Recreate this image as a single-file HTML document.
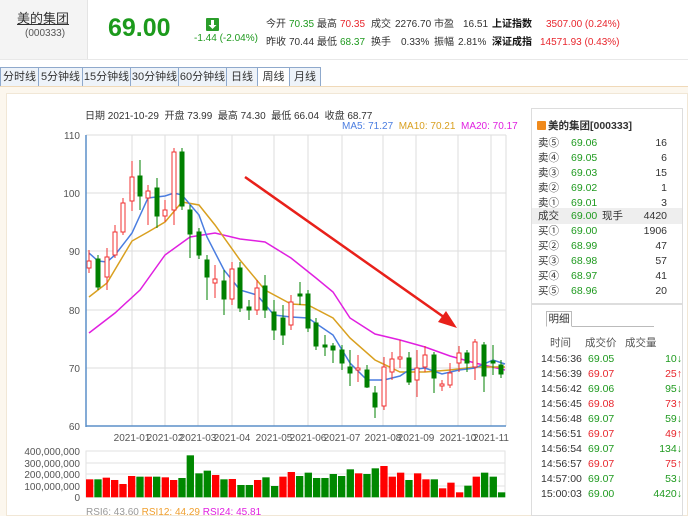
<!DOCTYPE html>
<html><head><meta charset="utf-8"><style>
*{margin:0;padding:0;box-sizing:border-box}
body{width:688px;height:516px;overflow:hidden;background:#fff;font-family:"Liberation Sans","Noto Sans CJK SC",sans-serif;font-size:11px;color:#333;position:relative}
.a{position:absolute;white-space:nowrap}
.s{position:absolute;white-space:nowrap;font-size:10px;color:#333;line-height:12px;height:12px}
.g,.s.g{color:#1f9a1f}.r,.s.r{color:#e8262d}
.tab{position:absolute;top:67px;height:19px;border:1px solid #8fa9cc;border-bottom:none;background:#eef3f9;font-size:11px;color:#333;text-align:center;line-height:18px}
.ob div{position:absolute;height:15px;line-height:15px;font-size:10.5px;white-space:nowrap}
.ob .v{left:622px;width:60px;text-align:right}
</style></head><body>
<div class="a" style="left:0;top:0;width:88px;height:59px;background:#f4f4f4;border-right:1px solid #e4e4e4"></div>
<div class="a" style="left:0;top:59px;width:688px;height:1px;background:#e8e8e8"></div>
<div class="a" style="left:17px;top:8px;font-size:13px;text-decoration:underline;color:#333">美的集团</div>
<div class="a" style="left:25px;top:28px;font-size:10px;color:#555">(000333)</div>
<div class="a" style="left:108px;top:14px;font-size:25px;font-weight:bold;color:#1c9a1c">69.00</div>
<div class="a" style="left:206px;top:18px;width:13px;height:13px;background:#2a9d2a;border-radius:1px"></div>
<svg class="a" style="left:206px;top:18px" width="13" height="13"><path d="M5 2h3v5h2.5L6.5 11 2.5 7H5z" fill="#fff"/></svg>
<div class="a g" style="left:194px;top:33px;font-size:10px">-1.44 (-2.04%)</div>
<div class="s" style="left:266px;top:19px">今开</div><div class="s g" style="left:289px;top:19px">70.35</div>
<div class="s" style="left:317px;top:19px">最高</div><div class="s r" style="left:340px;top:19px">70.35</div>
<div class="s" style="left:371px;top:19px">成交</div><div class="s" style="left:395px;top:19px">2276.70</div>
<div class="s" style="left:434px;top:19px">市盈</div><div class="s" style="left:463px;top:19px">16.51</div>
<div class="s" style="left:492px;top:19px;font-weight:bold;color:#111">上证指数</div><div class="s r" style="left:546px;top:19px">3507.00 (0.24%)</div>
<div class="s" style="left:266px;top:37px">昨收</div><div class="s" style="left:289px;top:37px">70.44</div>
<div class="s" style="left:317px;top:37px">最低</div><div class="s g" style="left:340px;top:37px">68.37</div>
<div class="s" style="left:371px;top:37px">换手</div><div class="s" style="left:401px;top:37px">0.33%</div>
<div class="s" style="left:434px;top:37px">振幅</div><div class="s" style="left:458px;top:37px">2.81%</div>
<div class="s" style="left:492px;top:37px;font-weight:bold;color:#111">深证成指</div><div class="s r" style="left:540px;top:37px">14571.93 (0.43%)</div>

<div class="tab" style="left:0;width:39px">分时线</div>
<div class="tab" style="left:38px;width:45px">5分钟线</div>
<div class="tab" style="left:82px;width:49px">15分钟线</div>
<div class="tab" style="left:130px;width:49px">30分钟线</div>
<div class="tab" style="left:178px;width:49px">60分钟线</div>
<div class="tab" style="left:226px;width:32px">日线</div>
<div class="tab" style="left:257px;width:33px;background:#fff;height:20px">周线</div>
<div class="tab" style="left:289px;width:32px">月线</div>
<div class="a" style="left:0;top:86px;width:688px;height:430px;background:#fcf7ee;border-top:1px solid #f0d9b8"></div>
<div class="a" style="left:6px;top:93px;width:682px;height:423px;background:#fff;border:1px solid #f1e7d6"></div>

<div class="a" style="left:85px;top:107px;font-size:10px">日期 2021-10-29 &nbsp;开盘 73.99 &nbsp;最高 74.30 &nbsp;最低 66.04 &nbsp;收盘 68.77</div>
<div class="a" style="left:342px;top:121px;font-size:10px"><span style="color:#4a7de0">MA5: 71.27</span> &nbsp;<span style="color:#d9a020">MA10: 70.21</span> &nbsp;<span style="color:#e020e0">MA20: 70.17</span></div>

<svg class="a" style="left:0;top:0" width="688" height="516">
<g stroke="#ddd" stroke-width="1">
<line x1="86" y1="135" x2="506" y2="135"/><line x1="86" y1="193" x2="506" y2="193"/><line x1="86" y1="251" x2="506" y2="251"/><line x1="86" y1="310" x2="506" y2="310"/><line x1="86" y1="368" x2="506" y2="368"/>
<line x1="132" y1="135" x2="132" y2="426"/><line x1="165" y1="135" x2="165" y2="426"/><line x1="198" y1="135" x2="198" y2="426"/><line x1="232" y1="135" x2="232" y2="426"/><line x1="274" y1="135" x2="274" y2="426"/><line x1="308" y1="135" x2="308" y2="426"/><line x1="342" y1="135" x2="342" y2="426"/><line x1="383" y1="135" x2="383" y2="426"/><line x1="416" y1="135" x2="416" y2="426"/><line x1="458" y1="135" x2="458" y2="426"/><line x1="491" y1="135" x2="491" y2="426"/><line x1="506" y1="135" x2="506" y2="426"/>
</g>
<g font-size="10" fill="#555" text-anchor="end"><text x="80" y="139">110</text><text x="80" y="197">100</text><text x="80" y="255">90</text><text x="80" y="314">80</text><text x="80" y="372">70</text><text x="80" y="430">60</text></g>
<g font-size="10" fill="#555" text-anchor="middle"><text x="132" y="441">2021-01</text><text x="165" y="441">2021-02</text><text x="198" y="441">2021-03</text><text x="232" y="441">2021-04</text><text x="274" y="441">2021-05</text><text x="308" y="441">2021-06</text><text x="342" y="441">2021-07</text><text x="383" y="441">2021-08</text><text x="416" y="441">2021-09</text><text x="458" y="441">2021-10</text><text x="491" y="441">2021-11</text></g>
<polyline fill="none" stroke="#e020e0" stroke-width="1.5" points="89,333 115,313 140,290 165,255 190,237 215,233 240,239 265,242 291,258 316,278 333,292 350,318 375,334 400,340 425,347 450,356 475,363 505,370"/>
<polyline fill="none" stroke="#d9a020" stroke-width="1.5" points="89,297 107,283 132,241 148,232 165,222 182,202 199,205 215,225 240,260 265,290 291,304 308,305 333,318 350,338 375,360 400,372 425,372 450,370 475,367 505,367"/>
<polyline fill="none" stroke="#4a7de0" stroke-width="1.5" points="89,253 98,261 107,262 115,255 132,233 148,198 165,196 174,193 182,195 199,215 207,237 224,270 240,290 257,295 274,315 291,317 308,318 333,335 350,363 367,380 384,380 400,376 409,370 425,368 442,374 459,370 475,368 493,360 505,364"/>
<g stroke-width="1">
<g stroke="#008000" fill="#008000">
<line x1="98" y1="255" x2="98" y2="290"/><rect x="96" y="259" width="4" height="28"/>
<line x1="140" y1="160" x2="140" y2="210"/><rect x="138" y="176" width="4" height="20"/>
<line x1="157" y1="178" x2="157" y2="228"/><rect x="155" y="188" width="4" height="28"/>
<line x1="182" y1="148" x2="182" y2="210"/><rect x="180" y="152" width="4" height="54"/>
<line x1="190" y1="205" x2="190" y2="258"/><rect x="188" y="210" width="4" height="24"/>
<line x1="199" y1="228" x2="199" y2="259"/><rect x="197" y="232" width="4" height="23"/>
<line x1="207" y1="255" x2="207" y2="300"/><rect x="205" y="260" width="4" height="17"/>
<line x1="224" y1="270" x2="224" y2="315"/><rect x="222" y="281" width="4" height="18"/>
<line x1="240" y1="262" x2="240" y2="312"/><rect x="238" y="268" width="4" height="40"/>
<line x1="249" y1="300" x2="249" y2="320"/><rect x="247" y="307" width="4" height="3"/>
<line x1="265" y1="275" x2="265" y2="318"/><rect x="263" y="286" width="4" height="24"/>
<line x1="274" y1="300" x2="274" y2="340"/><rect x="272" y="312" width="4" height="18"/>
<line x1="283" y1="305" x2="283" y2="345"/><rect x="281" y="318" width="4" height="17"/>
<line x1="300" y1="282" x2="300" y2="305"/><rect x="298" y="294" width="4" height="2"/>
<line x1="308" y1="290" x2="308" y2="332"/><rect x="306" y="294" width="4" height="34"/>
<line x1="316" y1="318" x2="316" y2="350"/><rect x="314" y="323" width="4" height="23"/>
<line x1="325" y1="335" x2="325" y2="356"/><rect x="323" y="345" width="4" height="2"/>
<line x1="333" y1="343" x2="333" y2="363"/><rect x="331" y="346" width="4" height="4"/>
<line x1="342" y1="345" x2="342" y2="370"/><rect x="340" y="350" width="4" height="13"/>
<line x1="350" y1="350" x2="350" y2="386"/><rect x="348" y="367" width="4" height="6"/>
<line x1="367" y1="365" x2="367" y2="388"/><rect x="365" y="370" width="4" height="17"/>
<line x1="375" y1="386" x2="375" y2="418"/><rect x="373" y="393" width="4" height="14"/>
<line x1="409" y1="352" x2="409" y2="385"/><rect x="407" y="358" width="4" height="24"/>
<line x1="434" y1="352" x2="434" y2="393"/><rect x="432" y="355" width="4" height="23"/>
<line x1="467" y1="350" x2="467" y2="372"/><rect x="465" y="353" width="4" height="10"/>
<line x1="484" y1="342" x2="484" y2="392"/><rect x="482" y="345" width="4" height="31"/>
<line x1="493" y1="345" x2="493" y2="375"/><rect x="491" y="361" width="4" height="2"/>
<line x1="501" y1="360" x2="501" y2="378"/><rect x="499" y="365" width="4" height="9"/>
</g>
<g stroke="#f03030" fill="#fff">
<line x1="89" y1="250" x2="89" y2="273"/><rect x="87" y="261" width="4" height="7"/>
<line x1="107" y1="248" x2="107" y2="290"/><rect x="105" y="257" width="4" height="20"/>
<line x1="115" y1="225" x2="115" y2="258"/><rect x="113" y="232" width="4" height="23"/>
<line x1="123" y1="198" x2="123" y2="235"/><rect x="121" y="203" width="4" height="29"/>
<line x1="132" y1="161" x2="132" y2="211"/><rect x="130" y="177" width="4" height="24"/>
<line x1="148" y1="185" x2="148" y2="225"/><rect x="146" y="191" width="4" height="7"/>
<line x1="165" y1="200" x2="165" y2="222"/><rect x="163" y="210" width="4" height="6"/>
<line x1="174" y1="148" x2="174" y2="225"/><rect x="172" y="152" width="4" height="58"/>
<line x1="215" y1="265" x2="215" y2="298"/><rect x="213" y="279" width="4" height="4"/>
<line x1="232" y1="262" x2="232" y2="305"/><rect x="230" y="269" width="4" height="30"/>
<line x1="257" y1="280" x2="257" y2="315"/><rect x="255" y="288" width="4" height="22"/>
<line x1="291" y1="295" x2="291" y2="330"/><rect x="289" y="302" width="4" height="23"/>
<line x1="358" y1="355" x2="358" y2="382"/><rect x="356" y="368" width="4" height="2"/>
<line x1="384" y1="357" x2="384" y2="410"/><rect x="382" y="367" width="4" height="39"/>
<line x1="392" y1="352" x2="392" y2="380"/><rect x="390" y="359" width="4" height="13"/>
<line x1="400" y1="340" x2="400" y2="368"/><rect x="398" y="357" width="4" height="2"/>
<line x1="417" y1="350" x2="417" y2="397"/><rect x="415" y="368" width="4" height="12"/>
<line x1="425" y1="346" x2="425" y2="372"/><rect x="423" y="355" width="4" height="12"/>
<line x1="442" y1="380" x2="442" y2="391"/><rect x="440" y="384" width="4" height="2"/>
<line x1="450" y1="363" x2="450" y2="388"/><rect x="448" y="373" width="4" height="12"/>
<line x1="459" y1="346" x2="459" y2="372"/><rect x="457" y="353" width="4" height="10"/>
<line x1="475" y1="339" x2="475" y2="380"/><rect x="473" y="342" width="4" height="25"/>
</g></g>
<line x1="86" y1="135" x2="86" y2="427" stroke="#5b8fc9" stroke-width="1.5"/>
<line x1="86" y1="426" x2="506" y2="426" stroke="#5b8fc9" stroke-width="1.5"/>
<line x1="245" y1="177" x2="448" y2="320" stroke="#e8201a" stroke-width="2.5"/>
<polygon points="457,328 438,322 446,311" fill="#e8201a"/>
<g stroke="#e2e2e2"><rect x="86" y="451" width="419" height="46" fill="none"/><line x1="86" y1="463" x2="505" y2="463"/><line x1="86" y1="474" x2="505" y2="474"/><line x1="86" y1="486" x2="505" y2="486"/></g>
<g font-size="10" fill="#555" text-anchor="end"><text x="80" y="455">400,000,000</text><text x="80" y="467">300,000,000</text><text x="80" y="478">200,000,000</text><text x="80" y="490">100,000,000</text><text x="80" y="501">0</text></g>
<g transform="translate(0,400) scale(0.3333)">
<rect x="258" y="238" width="22" height="54" fill="#f00"/><rect x="283" y="238" width="22" height="54" fill="#080"/><rect x="308" y="233" width="22" height="59" fill="#f00"/><rect x="333" y="240" width="22" height="52" fill="#f00"/><rect x="358" y="252" width="22" height="40" fill="#f00"/><rect x="384" y="228" width="22" height="64" fill="#f00"/><rect x="409" y="230" width="22" height="62" fill="#080"/><rect x="434" y="230" width="22" height="62" fill="#f00"/><rect x="459" y="230" width="22" height="62" fill="#080"/><rect x="485" y="232" width="22" height="60" fill="#f00"/><rect x="510" y="240" width="22" height="52" fill="#f00"/><rect x="535" y="234" width="22" height="58" fill="#080"/><rect x="560" y="166" width="22" height="126" fill="#080"/><rect x="586" y="220" width="22" height="72" fill="#080"/><rect x="611" y="212" width="22" height="80" fill="#080"/><rect x="636" y="225" width="22" height="67" fill="#f00"/><rect x="661" y="238" width="22" height="54" fill="#080"/><rect x="686" y="237" width="22" height="55" fill="#f00"/><rect x="712" y="255" width="22" height="37" fill="#080"/><rect x="737" y="255" width="22" height="37" fill="#080"/><rect x="762" y="240" width="22" height="52" fill="#f00"/><rect x="787" y="232" width="22" height="60" fill="#080"/><rect x="813" y="258" width="22" height="34" fill="#080"/><rect x="838" y="230" width="22" height="62" fill="#f00"/><rect x="863" y="216" width="22" height="76" fill="#f00"/><rect x="888" y="228" width="22" height="64" fill="#080"/><rect x="914" y="218" width="22" height="74" fill="#080"/><rect x="939" y="234" width="22" height="58" fill="#080"/><rect x="964" y="234" width="22" height="58" fill="#080"/><rect x="989" y="222" width="22" height="70" fill="#080"/><rect x="1014" y="228" width="22" height="64" fill="#080"/><rect x="1040" y="208" width="22" height="84" fill="#080"/><rect x="1065" y="220" width="22" height="72" fill="#f00"/><rect x="1090" y="222" width="22" height="70" fill="#080"/><rect x="1115" y="205" width="22" height="87" fill="#080"/><rect x="1141" y="198" width="22" height="94" fill="#f00"/><rect x="1166" y="230" width="22" height="62" fill="#f00"/><rect x="1191" y="218" width="22" height="74" fill="#f00"/><rect x="1216" y="240" width="22" height="52" fill="#080"/><rect x="1242" y="220" width="22" height="72" fill="#f00"/><rect x="1267" y="238" width="22" height="54" fill="#f00"/><rect x="1292" y="238" width="22" height="54" fill="#080"/><rect x="1317" y="265" width="22" height="27" fill="#f00"/><rect x="1342" y="248" width="22" height="44" fill="#f00"/><rect x="1368" y="277" width="22" height="15" fill="#f00"/><rect x="1393" y="257" width="22" height="35" fill="#080"/><rect x="1418" y="230" width="22" height="62" fill="#f00"/><rect x="1443" y="218" width="22" height="74" fill="#080"/><rect x="1469" y="230" width="22" height="62" fill="#080"/><rect x="1494" y="277" width="22" height="15" fill="#080"/>
</g>
<text x="86" y="515" font-size="10" fill="#999">RSI6: 43.60 <tspan fill="#f0a030">RSI12: 44.29</tspan> <tspan fill="#e020e0">RSI24: 45.81</tspan></text>
</svg>

<div class="a" style="left:531px;top:108px;width:152px;height:196px;border:1px solid #ddd"></div>
<div class="a" style="left:537px;top:121px;width:9px;height:9px;background:#f08a1c;border-radius:1px"></div>
<div class="a" style="left:548px;top:118px;font-size:10.5px;font-weight:bold;color:#333">美的集团[000333]</div>
<div class="a" style="left:532px;top:208px;width:150px;height:16px;background:#eee"></div>
<div class="ob">
<div style="left:538px;top:136px">卖⑤</div><div class="g" style="left:571px;top:136px">69.06</div><div style="right:21px;top:136px">16</div>
<div style="left:538px;top:151px">卖④</div><div class="g" style="left:571px;top:151px">69.05</div><div style="right:21px;top:151px">6</div>
<div style="left:538px;top:166px">卖③</div><div class="g" style="left:571px;top:166px">69.03</div><div style="right:21px;top:166px">15</div>
<div style="left:538px;top:181px">卖②</div><div class="g" style="left:571px;top:181px">69.02</div><div style="right:21px;top:181px">1</div>
<div style="left:538px;top:196px">卖①</div><div class="g" style="left:571px;top:196px">69.01</div><div style="right:21px;top:196px">3</div>
<div style="left:538px;top:209px">成交</div><div class="g" style="left:571px;top:209px">69.00</div><div style="left:602px;top:209px">现手</div><div style="right:21px;top:209px">4420</div>
<div style="left:538px;top:224px">买①</div><div class="g" style="left:571px;top:224px">69.00</div><div style="right:21px;top:224px">1906</div>
<div style="left:538px;top:239px">买②</div><div class="g" style="left:571px;top:239px">68.99</div><div style="right:21px;top:239px">47</div>
<div style="left:538px;top:254px">买③</div><div class="g" style="left:571px;top:254px">68.98</div><div style="right:21px;top:254px">57</div>
<div style="left:538px;top:269px">买④</div><div class="g" style="left:571px;top:269px">68.97</div><div style="right:21px;top:269px">41</div>
<div style="left:538px;top:284px">买⑤</div><div class="g" style="left:571px;top:284px">68.96</div><div style="right:21px;top:284px">20</div>
</div>
<div class="a" style="left:531px;top:304px;width:152px;height:212px;border:1px solid #ddd"></div>
<div class="a" style="left:546px;top:326px;width:108px;height:1px;background:#bbb"></div>
<div class="a" style="left:546px;top:311px;width:26px;height:16px;border:1px solid #bbb;border-bottom:1px solid #fff;background:#fff;font-size:10.5px;text-align:center;line-height:14px">明细</div>
<div class="ob">
<div style="left:550px;top:336px;color:#555">时间</div><div style="left:585px;top:336px;color:#555">成交价</div><div style="left:625px;top:336px;color:#555">成交量</div>
<div style="left:541px;top:352px">14:56:36</div><div class="g" style="left:588px;top:352px">69.05</div><div class="g v" style="top:352px">10↓</div>
<div style="left:541px;top:367px">14:56:39</div><div class="r" style="left:588px;top:367px">69.07</div><div class="r v" style="top:367px">25↑</div>
<div style="left:541px;top:382px">14:56:42</div><div class="g" style="left:588px;top:382px">69.06</div><div class="g v" style="top:382px">95↓</div>
<div style="left:541px;top:397px">14:56:45</div><div class="r" style="left:588px;top:397px">69.08</div><div class="r v" style="top:397px">73↑</div>
<div style="left:541px;top:412px">14:56:48</div><div class="g" style="left:588px;top:412px">69.07</div><div class="g v" style="top:412px">59↓</div>
<div style="left:541px;top:427px">14:56:51</div><div class="r" style="left:588px;top:427px">69.07</div><div class="r v" style="top:427px">49↑</div>
<div style="left:541px;top:442px">14:56:54</div><div class="g" style="left:588px;top:442px">69.07</div><div class="g v" style="top:442px">134↓</div>
<div style="left:541px;top:457px">14:56:57</div><div class="r" style="left:588px;top:457px">69.07</div><div class="r v" style="top:457px">75↑</div>
<div style="left:541px;top:472px">14:57:00</div><div class="g" style="left:588px;top:472px">69.07</div><div class="g v" style="top:472px">53↓</div>
<div style="left:541px;top:487px">15:00:03</div><div class="g" style="left:588px;top:487px">69.00</div><div class="g v" style="top:487px">4420↓</div>
</div>
</body></html>
